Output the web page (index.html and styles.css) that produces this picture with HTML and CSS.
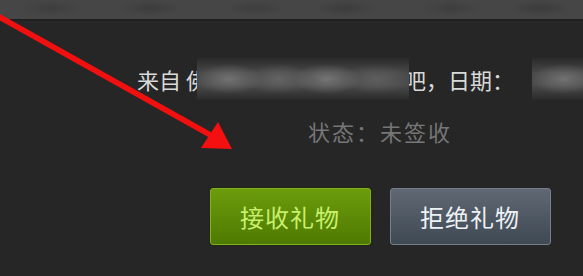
FILE: index.html
```html
<!DOCTYPE html>
<html lang="zh-CN">
<head>
<meta charset="utf-8">
<link rel="stylesheet" href="styles.css">
</head>
<body>
<div class="page">
  <div class="topbar"></div>
  <div class="dialog">
    <p class="from">来自 <span class="name"><span class="name-first">佛</span><span class="smudge"></span></span><span class="after">吧，日期：</span><span class="date"><span class="smudge"></span></span></p>
    <p class="status">状态：未签收</p>
    <div class="actions">
      <button class="btn btn-accept">接收礼物</button>
      <button class="btn btn-decline">拒绝礼物</button>
    </div>
  </div>
  <svg class="arrow" width="583" height="276" viewBox="0 0 583 276" aria-hidden="true">
    <line x1="-4" y1="15" x2="214" y2="137" stroke="#f01010" stroke-width="5.5" stroke-linecap="round"/>
    <polygon points="232,149 201,148 218,122" fill="#f41010"/>
  </svg>
</div>
</body>
</html>
```

FILE: styles.css
```css
* { box-sizing: border-box; }
html, body {
  margin: 0;
  padding: 0;
  width: 583px;
  height: 276px;
  overflow: hidden;
  background: #262626;
  font-family: "Noto Sans CJK SC", "Noto Sans", sans-serif;
}
.page {
  position: relative;
  width: 583px;
  height: 276px;
  overflow: hidden;
  background: #262626;
}
.topbar {
  height: 21px;
  background:
    radial-gradient(ellipse 30px 8px at 50px 8px, #3e3e3e, transparent),
    radial-gradient(ellipse 30px 8px at 150px 8px, #3c3c3c, transparent),
    radial-gradient(ellipse 30px 8px at 255px 8px, #3e3e3e, transparent),
    radial-gradient(ellipse 30px 8px at 345px 8px, #3c3c3c, transparent),
    radial-gradient(ellipse 30px 8px at 450px 8px, #3e3e3e, transparent),
    radial-gradient(ellipse 30px 8px at 540px 8px, #3c3c3c, transparent),
    #464646;
  border-bottom: 2px solid #1f1f1f;
}
.dialog {
  width: 406px;
  margin-left: 177px;
  display: flex;
  flex-direction: column;
  align-items: center;
}
.from {
  margin: 43px 0 0;
  white-space: nowrap;
  font-size: 22px;
  line-height: 30px;
  color: #d9d9d9;
  width: 486px;
  flex-shrink: 0;
}
.name {
  position: relative;
  display: inline-block;
  width: 218px;
  height: 30px;
  vertical-align: top;
}
.name-first { display: inline-block; }
.smudge {
  position: absolute;
  z-index: 1;
  background:
    radial-gradient(ellipse 34px 15px at 32px 50%, rgba(140,140,140,0.6), transparent),
    radial-gradient(ellipse 34px 15px at 82px 50%, rgba(125,125,125,0.5), transparent),
    radial-gradient(ellipse 34px 15px at 130px 50%, rgba(145,145,145,0.6), transparent),
    radial-gradient(ellipse 34px 15px at 180px 50%, rgba(115,115,115,0.5), transparent),
    linear-gradient(#2a2a2a, #484848 35%, #4a4a4a 65%, #2a2a2a);
}
.name .smudge {
  left: 11px;
  right: -5px;
  top: -6px;
  bottom: -6px;
}
.date {
  position: relative;
  display: inline-block;
  width: 100px;
  height: 30px;
  margin-left: 18px;
  vertical-align: top;
}
.date .smudge {
  top: -6px;
  bottom: -6px;
  left: 0;
  right: 0;
}
.status {
  margin: 22px 0 0;
  font-size: 22px;
  line-height: 30px;
  letter-spacing: 2px;
  color: #767676;
}
.actions {
  display: flex;
  gap: 19px;
  margin-top: 42px;
}
.btn {
  width: 161px;
  height: 57px;
  border-radius: 3px;
  font-family: "Noto Sans CJK SC", sans-serif;
  font-size: 24px;
  letter-spacing: 1px;
  padding: 0;
  cursor: pointer;
}
.btn-accept {
  background: linear-gradient(#6c9c0c, #4e7a01);
  border: 1px solid #83b01e;
  color: #c8f06c;
  box-shadow: 0 0 2px #1a2a00;
}
.btn-decline {
  background: linear-gradient(#5f6873, #3f4954);
  border: 1px solid #77808a;
  color: #eef2f6;
}
.arrow {
  position: absolute;
  left: 0;
  top: 0;
  z-index: 2;
  pointer-events: none;
}
```
